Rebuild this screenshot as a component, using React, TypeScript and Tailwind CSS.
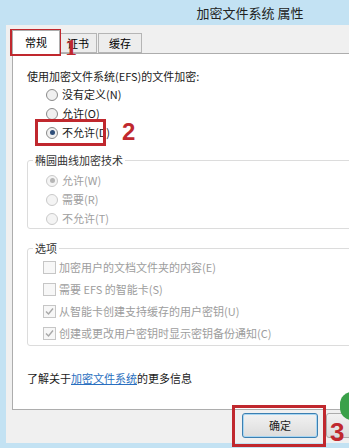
import React from "react";

const font = { fontFamily: '"Noto Sans CJK SC", "Noto Sans", sans-serif' };

const Radio: React.FC<{ checked?: boolean; disabled?: boolean; label: string }> = ({ checked, disabled, label }) => (
  <div className="flex items-center h-[19px]">
    <span
      className={`w-[12px] h-[12px] rounded-full border flex items-center justify-center ${
        disabled ? "border-[#c9c9c9] bg-[#f4f4f4]" : "border-[#8a8a8a] bg-[#f0f0f0]"
      }`}
    >
      {checked && <span className={`w-[5px] h-[5px] rounded-full ${disabled ? "bg-[#b5b5b5]" : "bg-[#2f4f7a]"}`} />}
    </span>
    <span className={`ml-[4px] ${disabled ? "text-[#a0a0a0]" : "text-[#1a1a1a]"}`}>{label}</span>
  </div>
);

const Check: React.FC<{ checked?: boolean; label: string }> = ({ checked, label }) => (
  <div className="flex items-center h-[22px]">
    <span className="w-[13px] h-[13px] border border-[#c6c6c6] bg-[#f7f7f7] flex items-center justify-center">
      {checked && (
        <svg width="9" height="9" viewBox="0 0 9 9">
          <path d="M1 4.5 L3.5 7 L8 1.5" stroke="#a8a8a8" strokeWidth="1.4" fill="none" />
        </svg>
      )}
    </span>
    <span className="ml-[3px] text-[#9d9d9d]">{label}</span>
  </div>
);

export default function App() {
  return (
    <div className="relative w-[349px] h-[448px] overflow-hidden bg-[#c3e2f3] text-[11px]" style={font}>
      <div className="w-[500px] h-full flex flex-col">
        <div className="h-[25px] flex items-center justify-center text-[13px] text-[#222]">加密文件系统 属性</div>
        <div className="flex-1 ml-[6px] mb-[5px] bg-[#f0f0f0] flex flex-col">
          <div className="flex items-end h-[28px] pl-[6px]">
            <div className="h-[24px] w-[48px] bg-white border border-b-0 border-[#adadad] flex items-center justify-center relative top-[1px] z-10">
              常规
            </div>
            <div className="h-[20px] w-[37px] bg-[#ededed] border border-l-0 border-[#b5b5b5] flex items-center justify-center">证书</div>
            <div className="h-[20px] w-[44px] ml-[1px] bg-[#ededed] border border-[#b5b5b5] flex items-center justify-center">缓存</div>
          </div>
          <div className="ml-[6px] h-[357px] bg-white border border-[#adadad] pl-[14px] pt-[14px] text-[#1a1a1a]">
            <div className="h-[16px] leading-[16px]">使用加密文件系统(EFS)的文件加密:</div>
            <div className="ml-[19px] mt-[1px]">
              <Radio label="没有定义(N)" />
              <Radio label="允许(O)" />
              <Radio checked label="不允许(D)" />
            </div>
            <div className="relative mt-[18px] border border-[#dcdcdc] rounded-[3px] h-[69px] pl-[18px] pt-[10px]">
              <span className="absolute -top-[9px] left-[5px] bg-white px-[2px] text-[#333]">椭圆曲线加密技术</span>
              <Radio checked disabled label="允许(W)" />
              <Radio disabled label="需要(R)" />
              <Radio disabled label="不允许(T)" />
            </div>
            <div className="relative mt-[19px] border border-[#dcdcdc] rounded-[3px] h-[98px] pl-[15px] pt-[7px]">
              <span className="absolute -top-[9px] left-[5px] bg-white px-[2px] text-[#333]">选项</span>
              <Check label="加密用户的文档文件夹的内容(E)" />
              <Check label="需要 EFS 的智能卡(S)" />
              <Check checked label="从智能卡创建支持缓存的用户密钥(U)" />
              <Check checked label="创建或更改用户密钥时显示密钥备份通知(C)" />
            </div>
            <div className="mt-[24px]">
              了解关于<span className="text-[#2a6fc0] underline">加密文件系统</span>的更多信息
            </div>
          </div>
          <div className="flex items-start pl-[236px] pt-[3px] gap-[8px]">
            <button className="w-[76px] h-[25px] rounded-[3px] border border-[#3c7fb1] bg-gradient-to-b from-[#f2f2f2] to-[#dcdcdc] text-[11px] text-[#222] shadow-[inset_0_0_0_1px_#a8d6f2]">
              确定
            </button>
            <button className="w-[76px] h-[25px] rounded-[3px] border border-[#acacac] bg-gradient-to-b from-[#f2f2f2] to-[#dcdcdc]" />
          </div>
        </div>
      </div>

      {/* annotations */}
      <div className="absolute left-[10px] top-[29px] w-[51px] h-[27px] border-[3px] border-[#c0282e]" />
      <div className="absolute left-[65px] top-[35px] text-[#c0282e] font-bold text-[24px] leading-none" style={{ fontFamily: '"Liberation Serif", serif' }}>1</div>
      <div className="absolute left-[35px] top-[119px] w-[71px] h-[27px] border-[3px] border-[#c0282e]" />
      <div className="absolute left-[122px] top-[120px] text-[#c0282e] font-bold text-[24px] leading-none" style={{ fontFamily: '"Liberation Sans", sans-serif' }}>2</div>
      <div className="absolute left-[232px] top-[405px] w-[94px] h-[42px] border-[3px] border-[#c0282e]" />
      <div className="absolute left-[340px] top-[392px] w-[24px] h-[28px] rounded-full bg-[#3aa14a]" />
      <div className="absolute left-[330px] top-[419px] text-[#c0282e] font-bold text-[26px] leading-none" style={{ fontFamily: '"Liberation Sans", sans-serif' }}>3</div>
    </div>
  );
}
